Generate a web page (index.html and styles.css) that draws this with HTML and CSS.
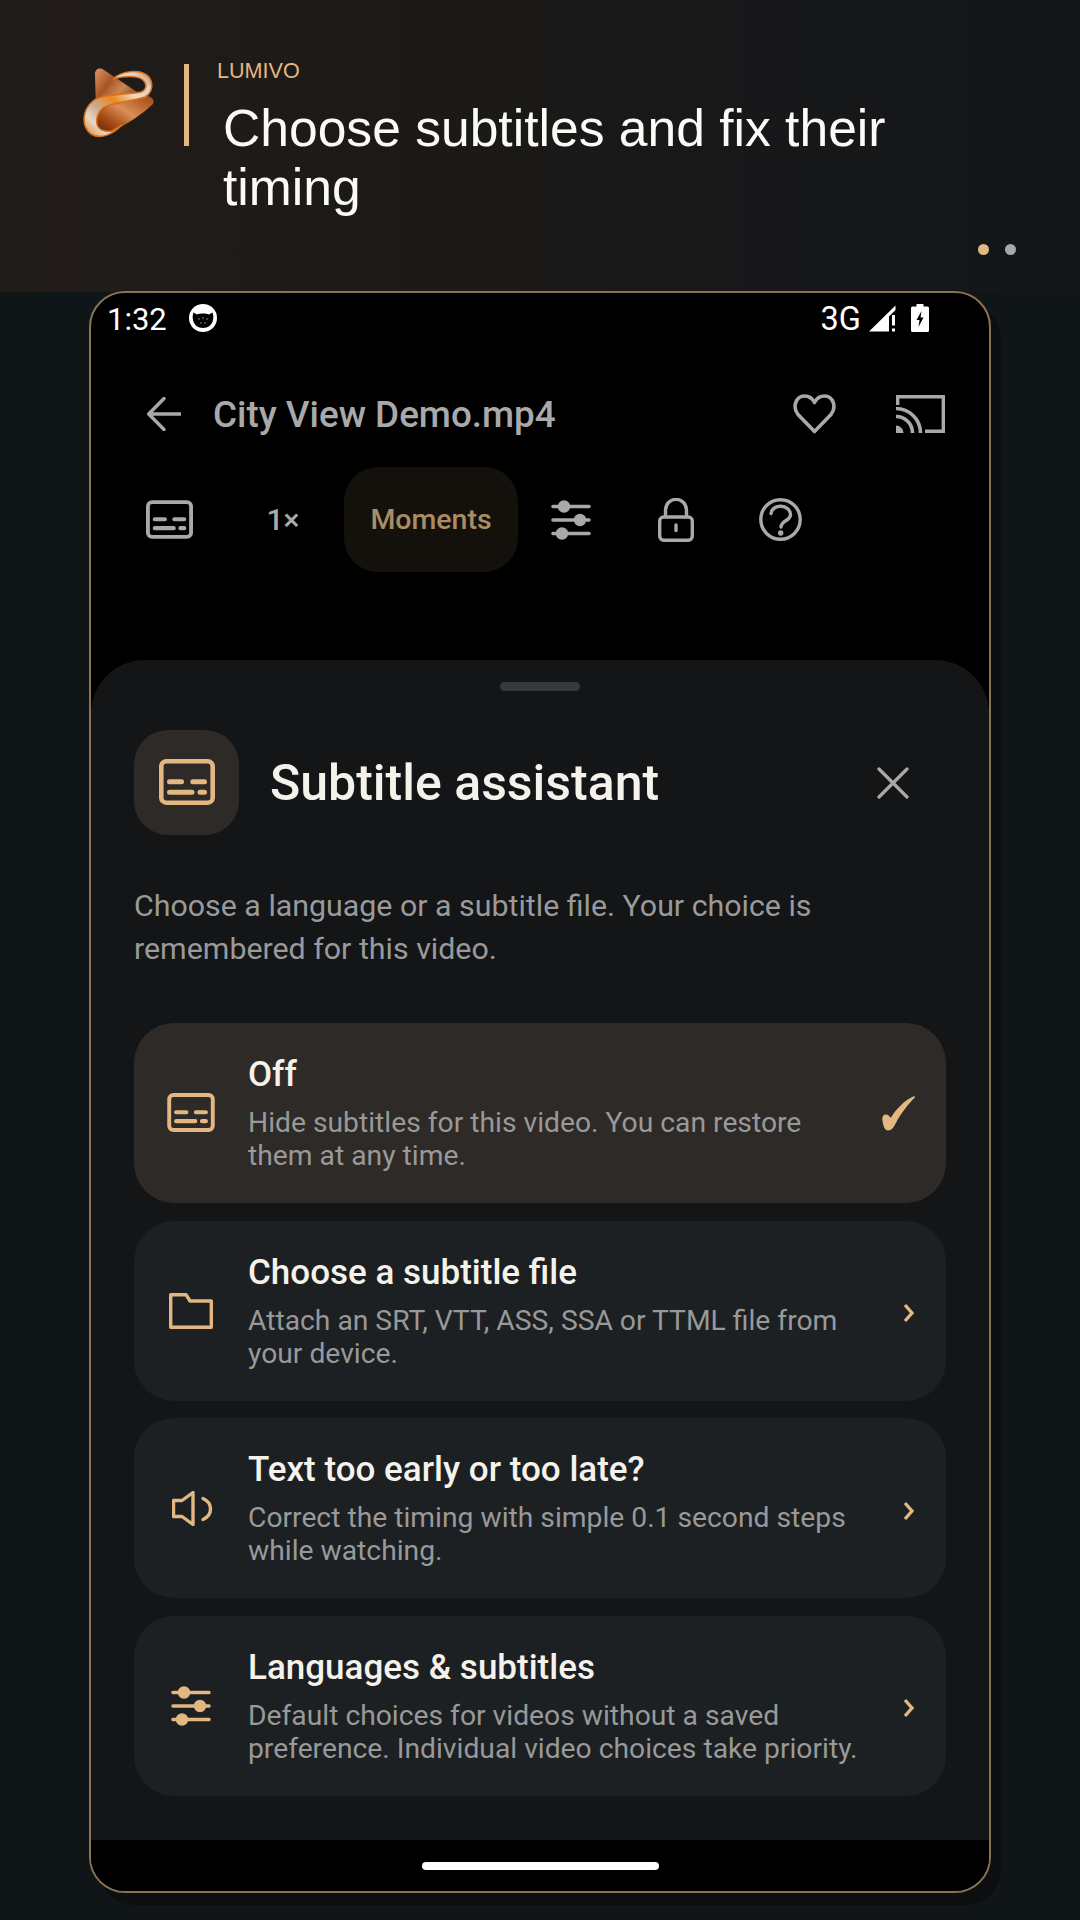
FILE: index.html
```html
<!DOCTYPE html>
<html lang="en">
<head>
<meta charset="utf-8">
<title>Lumivo</title>
<link rel="stylesheet" href="styles.css">
</head>
<body>
<svg class="defs" width="0" height="0" aria-hidden="true">
  <defs>
    <symbol id="i-sub" viewBox="0 0 56 46">
      <rect x="2.300" y="2.300" width="51.400" height="41.400" rx="5" fill="none" stroke="currentColor" stroke-width="4.600"/>
      <path d="M10.500 22.700H22.500M33.800 22.700H45.500M10.500 33.300H33M41 33.300H45.500" fill="none" stroke="currentColor" stroke-width="5" stroke-linecap="round"/>
    </symbol>
    <symbol id="i-sliders" viewBox="0 0 40 40">
      <path d="M2 6.500H38M2 20H38M2 33.500H38" fill="none" stroke="currentColor" stroke-width="3.600" stroke-linecap="round"/>
      <circle cx="13" cy="6.500" r="6.200" fill="currentColor"/>
      <circle cx="29" cy="20" r="6.200" fill="currentColor"/>
      <circle cx="11" cy="33.500" r="6.200" fill="currentColor"/>
    </symbol>
    <symbol id="i-chev" viewBox="0 0 11 20">
      <path d="M2 2L9 10L2 18" fill="none" stroke="currentColor" stroke-width="3.400"/>
    </symbol>
    <linearGradient id="g-body" x1="0" y1="1" x2="1" y2="0">
      <stop offset="0" stop-color="#5e2206"/>
      <stop offset=".3" stop-color="#a94e18"/>
      <stop offset=".55" stop-color="#d98f58"/>
      <stop offset=".8" stop-color="#b8632c"/>
      <stop offset="1" stop-color="#9a4a1a"/>
    </linearGradient>
    <linearGradient id="g-tri" x1="0" y1="0" x2="1" y2=".8">
      <stop offset="0" stop-color="#d9986a"/>
      <stop offset=".35" stop-color="#a65524"/>
      <stop offset=".6" stop-color="#cf8650"/>
      <stop offset="1" stop-color="#6e300c"/>
    </linearGradient>
    <linearGradient id="g-rib" x1="0" y1="1" x2="1" y2="0">
      <stop offset="0" stop-color="#e8801f"/>
      <stop offset=".18" stop-color="#e6d6c8"/>
      <stop offset=".32" stop-color="#c9a88e"/>
      <stop offset=".5" stop-color="#ea8a20"/>
      <stop offset=".68" stop-color="#f0d8bd"/>
      <stop offset=".85" stop-color="#ddd2ca"/>
      <stop offset="1" stop-color="#d07a32"/>
    </linearGradient>
  </defs>
</svg>

<header class="hero">
  <div class="hero-main">
    <svg class="logo" viewBox="0 0 72 70" width="72" height="70" aria-hidden="true">
      <path d="M12 6C12 1 17-1 21 2L54 24L35 28C24 31 16 36 13 46Z" fill="url(#g-tri)"/>
      <path d="M13 49C20 36 40 33 56 28C65 26 73 30 70 36C62 44 40 60 24 65C16 67 13 60 13 49Z" fill="url(#g-body)"/>
      <path d="M30 11C38 3 58 0 66 9C71 16 69 25 62 29C52 33 30 34 20 40C15 44 13 50 14 56C15 62 22 64 29 63L39 57C30 66 18 72 8 66C-2 58-1 42 10 33C20 25 45 27 58 24C63 22 65 17 60 12C54 7 40 8 30 11Z" fill="url(#g-rib)" stroke="#d9701c" stroke-width="1.500"/>
    </svg>
    <div class="hero-rule"></div>
    <div class="hero-text">
      <div class="brand">LUMIVO</div>
      <h1 class="hero-title">Choose subtitles and fix their timing</h1>
    </div>
  </div>
  <div class="dots"><span class="dot dot-on"></span><span class="dot"></span></div>
</header>

<main class="phone">
  <div class="status">
    <span class="time">1:32</span>
    <svg class="cat" viewBox="0 0 28 28" width="28" height="28" aria-hidden="true">
      <circle cx="14" cy="14" r="14" fill="#fff"/>
      <path d="M4.500 8.500L8 10.500C11 9.300 17 9.300 20 10.500L23.500 8.500C24.500 11 24.500 14 24 16C23 21 19 24 14 24C9 24 5 21 4 16C3.500 14 3.500 11 4.500 8.500Z" fill="#000"/>
      <g fill="#555"><circle cx="10" cy="15" r="1"/><circle cx="14" cy="14" r="1"/><circle cx="18" cy="15" r="1"/><circle cx="12" cy="19" r="1"/><circle cx="16" cy="19" r="1"/></g>
    </svg>
    <span class="net">3G</span>
    <svg class="signal" viewBox="0 0 27 27" width="27" height="27" aria-hidden="true">
      <path d="M0 26.500L26.500 0.500V5L20 11.500V26.500Z" fill="#fff"/>
      <path d="M23 10H26V20.500H23ZM23 23.500H26V26.500H23Z" fill="#fff"/>
    </svg>
    <svg class="battery" viewBox="0 0 18 28" width="18" height="28" aria-hidden="true">
      <path d="M5.500 0H12.500V2.500H16.500Q18 2.500 18 4V26.500Q18 28 16.500 28H1.500Q0 28 0 26.500V4Q0 2.500 1.500 2.500H5.500Z" fill="#fff"/>
      <path d="M10.500 7L5.500 16H8.500L7.500 23L12.500 13.500H9.500Z" fill="#000"/>
    </svg>
  </div>

  <div class="appbar">
    <svg class="ic-back" viewBox="0 0 34 34" width="34" height="34" aria-hidden="true">
      <path d="M33 17H2M17 1.500L1.700 17L17 32.500" fill="none" stroke="currentColor" stroke-width="3.400" stroke-linecap="round" stroke-linejoin="round"/>
    </svg>
    <div class="file">City View Demo.mp4</div>
    <svg class="ic-heart" viewBox="0 0 43 40" width="43" height="40" aria-hidden="true">
      <path d="M21.500 37.500L5 20.500C-1 13 3 2 11.500 2C16 2 19.500 4.500 21.500 8.500C23.500 4.500 27 2 31.500 2C40 2 44 13 38 20.500Z" fill="none" stroke="currentColor" stroke-width="3.600" stroke-linejoin="round"/>
    </svg>
    <svg class="ic-cast" viewBox="0 0 49 38" width="49" height="38" aria-hidden="true">
      <path d="M1.700 10V1.700H47.300V36.300H29" fill="none" stroke="currentColor" stroke-width="3.400"/>
      <path d="M0 30.500A7.500 7.500 0 0 1 7.500 38H0Z" fill="currentColor"/>
      <path d="M0 21.500A16.500 16.500 0 0 1 16.500 38M0 13.500A24.500 24.500 0 0 1 24.500 38" fill="none" stroke="currentColor" stroke-width="3.600"/>
    </svg>
  </div>

  <div class="tools">
    <div class="tool">
      <svg class="ic-toolsub" aria-hidden="true"><use href="#i-sub"/></svg>
    </div>
    <div class="tool tool-speed">1×</div>
    <div class="tool tool-pill">Moments</div>
    <div class="tool">
      <svg class="ic-toolsl" aria-hidden="true"><use href="#i-sliders"/></svg>
    </div>
    <div class="tool">
      <svg viewBox="0 0 36 44" width="36" height="44" aria-hidden="true">
        <path d="M7.500 19V13C7.500-2.500 28.500-2.500 28.500 13V19" fill="none" stroke="currentColor" stroke-width="3.400"/>
        <rect x="1.700" y="19" width="32.600" height="23.300" rx="4" fill="none" stroke="currentColor" stroke-width="3.400"/>
        <path d="M18 27V32.500" fill="none" stroke="currentColor" stroke-width="3.400" stroke-linecap="round"/>
      </svg>
    </div>
    <div class="tool">
      <svg viewBox="0 0 43 43" width="43" height="43" aria-hidden="true">
        <circle cx="21.500" cy="21.500" r="19.700" fill="none" stroke="currentColor" stroke-width="3.400"/>
        <path d="M12 15.500C13 5.500 31 6 31.500 16.500C31.800 23 22.500 22 22 29" fill="none" stroke="currentColor" stroke-width="3.400" stroke-linecap="round"/>
        <circle cx="21.700" cy="35" r="2.700" fill="currentColor"/>
      </svg>
    </div>
  </div>

  <div class="spacer"></div>

  <section class="sheet">
    <div class="handle"></div>
    <div class="sheet-head">
      <div class="head-icon">
        <svg class="ic-headsub" aria-hidden="true"><use href="#i-sub"/></svg>
      </div>
      <h2 class="sheet-title">Subtitle assistant</h2>
      <svg class="ic-close" viewBox="0 0 32 32" width="32" height="32" aria-hidden="true">
        <path d="M2 2L30 30M30 2L2 30" fill="none" stroke="currentColor" stroke-width="3.200" stroke-linecap="round"/>
      </svg>
    </div>
    <p class="desc">Choose a language or a subtitle file. Your choice is remembered for this video.</p>

    <div class="cards">
      <div class="card card-on">
        <div class="card-icon"><svg class="ic-cardsub" aria-hidden="true"><use href="#i-sub"/></svg></div>
        <div class="card-text">
          <div class="card-title">Off</div>
          <div class="card-sub">Hide subtitles for this video. You can restore them at any time.</div>
        </div>
        <div class="trail">
          <svg class="check" viewBox="243 232 100 106" width="33" height="35" aria-hidden="true">
            <path d="M341 232C312 244 285 272 270 298C264 290 258 286 250 289C242 293 243 305 247 320C250 334 258 338 266 336C274 334 279 325 286 312C300 285 322 258 343 236Z" fill="currentColor"/>
          </svg>
        </div>
      </div>
      <div class="card">
        <div class="card-icon">
          <svg viewBox="0 0 44 36" width="44" height="36" aria-hidden="true">
            <path d="M1.700 1.700H17L21 8H42.300V34.300H1.700Z" fill="none" stroke="currentColor" stroke-width="3.400" stroke-linejoin="round"/>
          </svg>
        </div>
        <div class="card-text">
          <div class="card-title">Choose a subtitle file</div>
          <div class="card-sub">Attach an SRT, VTT, ASS, SSA or TTML file from your device.</div>
        </div>
        <div class="trail"><svg class="chev" aria-hidden="true"><use href="#i-chev"/></svg></div>
      </div>
      <div class="card">
        <div class="card-icon">
          <svg class="ic-speaker" viewBox="0 0 42 35" width="42" height="35" aria-hidden="true">
            <path d="M1.500 9.500H10L21 1.500V33.500L10 25.500H1.500Z" fill="none" stroke="currentColor" stroke-width="3.400" stroke-linejoin="round"/>
            <path d="M31 7.500C41 12 41 24 31 28.500" fill="none" stroke="currentColor" stroke-width="3.400" stroke-linecap="round"/>
          </svg>
        </div>
        <div class="card-text">
          <div class="card-title">Text too early or too late?</div>
          <div class="card-sub">Correct the timing with simple 0.1 second steps while watching.</div>
        </div>
        <div class="trail"><svg class="chev" aria-hidden="true"><use href="#i-chev"/></svg></div>
      </div>
      <div class="card">
        <div class="card-icon"><svg class="ic-cardsl" aria-hidden="true"><use href="#i-sliders"/></svg></div>
        <div class="card-text">
          <div class="card-title">Languages &amp; subtitles</div>
          <div class="card-sub">Default choices for videos without a saved preference. Individual video choices take priority.</div>
        </div>
        <div class="trail"><svg class="chev" aria-hidden="true"><use href="#i-chev"/></svg></div>
      </div>
    </div>
  </section>

  <div class="navbar"><div class="home"></div></div>
</main>
</body>
</html>
```

FILE: styles.css
```css
* { box-sizing: border-box; }
html, body { margin: 0; padding: 0; }
body {
  width: 1080px;
  height: 1920px;
  overflow: hidden;
  background: #101518;
  font-family: Roboto, "Noto Sans", sans-serif;
}
.defs { position: absolute; }

.hero {
  height: 292px;
  padding: 64px 64px 0 83px;
  background: linear-gradient(90deg, #211c18 0%, #1a1918 50%, #15171a 85%, #121619 100%);
  display: flex;
  flex-direction: column;
}
.hero-main { display: flex; align-items: flex-start; }
.logo { margin-top: 4px; flex: none; }
.hero-rule { width: 5px; height: 82px; margin-left: 29px; background: #e3b781; flex: none; }
.hero-text { margin-left: 28px; font-family: "Liberation Sans", Arial, sans-serif; }
.brand { font-size: 21.600px; line-height: 24px; margin-top: -5px; color: #e3b781; font-weight: 400; }
.hero-title {
  margin: 16px 0 0 6px;
  font-size: 51.600px;
  line-height: 59px;
  font-weight: 400;
  color: #fbfaf7;
  width: 720px;
}
.dots { display: flex; gap: 16px; justify-content: flex-end; margin-top: auto; padding-bottom: 37px; }
.dot { width: 11px; height: 11px; border-radius: 50%; background: #a6a8aa; }
.dot-on { background: #e3b781; }

.phone {
  width: 902px;
  height: 1602px;
  margin: -1px 0 0 89px;
  border: 2px solid #8a7355;
  border-radius: 36px;
  background: #000;
  box-shadow: 10px 12px 0 #0c0e10;
  overflow: hidden;
  display: flex;
  flex-direction: column;
  color: #a9a9a9;
  position: relative;
}
.status {
  height: 50px;
  padding: 0 60px 0 16px;
  display: flex;
  align-items: center;
  color: #fff;
  flex: none;
}
.time { font-size: 31px; width: 82px; margin-top: 2px; }
.cat { flex: none; }
.net { margin-left: auto; margin-top: 1px; font-size: 32.500px; }
.signal { margin-left: 8px; flex: none; }
.battery { margin-left: 15px; flex: none; }

.appbar {
  height: 100px;
  margin-top: 21px;
  padding: 0 44px 0 56px;
  display: flex;
  align-items: center;
  flex: none;
}
.file { margin-left: 32px; font-size: 36.800px; font-weight: 500; color: #a9a9a9; }
.ic-heart { margin-left: auto; flex: none; }
.ic-cast { margin-left: 60px; flex: none; }

.tools {
  margin-top: 3px;
  padding-left: 26px;
  height: 105px;
  display: flex;
  flex: none;
}
.tool {
  width: 105px;
  height: 105px;
  display: flex;
  align-items: center;
  justify-content: center;
  flex: none;
}
.tool-speed { width: 122px; font-size: 30px; font-weight: 500; color: #a9a9a9; }
.tool-pill {
  width: 174px;
  border-radius: 34px;
  background: #14110d;
  color: #a98d65;
  font-size: 28.500px;
  font-weight: 500;
}
.ic-toolsub { width: 47px; height: 39px; }
.ic-toolsl { width: 40px; height: 40px; }

.spacer { flex: 1; }

.sheet {
  height: 1180px;
  padding: 22px 43px 0;
  border-radius: 54px 54px 0 0;
  background: #131517;
  flex: none;
}
.handle { width: 80px; height: 9px; margin: 0 auto; border-radius: 5px; background: #38393b; }
.sheet-head { margin-top: 39px; height: 105px; display: flex; align-items: center; }
.head-icon {
  width: 105px;
  height: 105px;
  border-radius: 34px;
  background: #2e2a27;
  color: #e3b781;
  display: flex;
  align-items: center;
  justify-content: center;
  flex: none;
}
.ic-headsub { width: 56px; height: 46px; margin-top: -1px; }
.sheet-title { margin: 0 0 0 31px; font-size: 50px; font-weight: 500; color: #f5f2ec; }
.ic-close { margin-left: auto; margin-right: 37px; color: #a9a9a9; flex: none; }
.desc { margin: 49px 0 0; font-size: 30.350px; line-height: 43px; color: #9a9a9a; }

.cards { margin-top: 53px; display: flex; flex-direction: column; gap: 17.500px; }
.card {
  height: 180px;
  padding: 0 32px 0 33px;
  border-radius: 40px;
  background: #1c2023;
  display: flex;
  align-items: center;
}
.card-on { background: #2e2a27; }
.card-icon {
  width: 48px;
  margin-right: 33px;
  color: #e3b781;
  display: flex;
  justify-content: center;
  flex: none;
}
.ic-cardsub { width: 48px; height: 39px; margin-top: -2px; }
.ic-cardsl { width: 40px; height: 40px; }
.ic-speaker { margin-left: 4px; }
.card-text { width: 615px; margin-top: 1px; flex: none; }
.card-title { font-size: 35px; line-height: 40px; font-weight: 500; color: #f5f2ec; }
.card-sub { margin-top: 11px; font-size: 28.250px; line-height: 33px; color: #999; }
.trail { margin-left: auto; color: #e3b781; display: flex; align-items: center; }
.check { display: block; margin-right: -1px; }
.chev { display: block; width: 11px; height: 20px; margin-top: 5px; }

.navbar {
  height: 51px;
  flex: none;
  display: flex;
  align-items: center;
  justify-content: center;
  background: #000;
}
.home { width: 237px; height: 8px; border-radius: 4px; background: #fff; }
```
